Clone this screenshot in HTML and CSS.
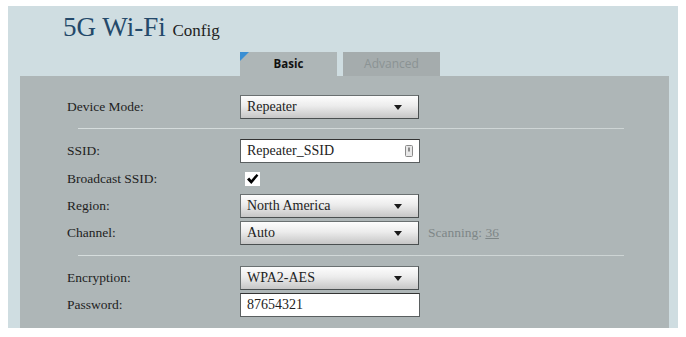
FILE: index.html
```html
<!DOCTYPE html>
<html lang="en">

<head>
    <meta charset="utf-8">
    <title>5G Wi-Fi Config</title>
    <link rel="stylesheet" href="styles.css">
</head>

<body>
    <div class="ramme">
        <h1 class="titel"><span class="stor">5G Wi-Fi</span> <span class="lille">Config</span></h1>

        <nav class="faner">
            <div class="fane valgt">Basic</div>
            <div class="fane">Advanced</div>
        </nav>

        <section class="panel">
            <div class="raekke">
                <div class="etiket">Device Mode:</div>
                <div class="vaelger"><span>Repeater</span><svg class="pil" width="8" height="5" viewBox="0 0 8 5"><path d="M0 0H8L4 5Z" fill="#1a1a1a"/></svg></div>
            </div>

            <hr class="skille skille1">

            <div class="raekke">
                <div class="etiket">SSID:</div>
                <div class="felt"><span>Repeater_SSID</span>
                    <svg class="noegle" width="8" height="12" viewBox="0 0 8 12"><rect x="0.5" y="0.5" width="7" height="11" rx="1" fill="#e8e8e8" stroke="#8a8a8a"/><rect x="3" y="2.5" width="2" height="4" fill="#8a8a8a"/></svg>
                </div>
            </div>

            <div class="raekke hoej">
                <div class="etiket">Broadcast SSID:</div>
                <div class="tjek"><svg width="15" height="14" viewBox="0 0 15 14"><path d="M2 7.5L4.2 5.6L6.3 8L11.5 2L13.4 3.6L6.3 12Z" fill="#000"/></svg></div>
            </div>

            <div class="raekke">
                <div class="etiket">Region:</div>
                <div class="vaelger"><span>North America</span><svg class="pil" width="8" height="5" viewBox="0 0 8 5"><path d="M0 0H8L4 5Z" fill="#1a1a1a"/></svg></div>
            </div>

            <div class="raekke">
                <div class="etiket">Channel:</div>
                <div class="vaelger"><span>Auto</span><svg class="pil" width="8" height="5" viewBox="0 0 8 5"><path d="M0 0H8L4 5Z" fill="#1a1a1a"/></svg></div>
                <div class="scanning">Scanning: <u>36</u></div>
            </div>

            <hr class="skille skille2">

            <div class="raekke">
                <div class="etiket">Encryption:</div>
                <div class="vaelger"><span>WPA2-AES</span><svg class="pil" width="8" height="5" viewBox="0 0 8 5"><path d="M0 0H8L4 5Z" fill="#1a1a1a"/></svg></div>
            </div>

            <div class="raekke">
                <div class="etiket">Password:</div>
                <div class="felt"><span>87654321</span></div>
            </div>
        </section>
    </div>
</body>

</html>
```

FILE: styles.css
```css
* {
    margin: 0;
    padding: 0;
    box-sizing: border-box;
}

body {
    background-color: #ffffff;
    font-family: "Liberation Serif", serif;
    color: #222222;
}

.ramme {
    margin: 6px 8px 0 8px;
    width: 670px;
    background-color: #cfdde1;
    padding-top: 6px;
}

.titel {
    height: 30px;
    padding-left: 55px;
    font-weight: normal;
    font-size: 27px;
    line-height: 30px;
    white-space: nowrap;
    overflow: hidden;
}

.stor {
    color: #24496a;
}

.lille {
    font-size: 17px;
    color: #222222;
}

.faner {
    display: flex;
    gap: 6px;
    padding-left: 232px;
    margin-top: 10px;
}

.fane {
    position: relative;
    width: 97px;
    height: 24px;
    line-height: 24px;
    text-align: center;
    font-family: "Open Sans", sans-serif;
    font-size: 12px;
    color: #8b9394;
    background-color: #a5acad;
}

.valgt {
    background-color: #aeb6b7;
    color: #111111;
    font-weight: bold;
    font-size: 11.5px;
}

/* lille blå hjørne på den valgte fane */
.valgt::before {
    content: "";
    position: absolute;
    left: 0;
    top: 0;
    border-top: 9px solid #3b8fd4;
    border-right: 9px solid transparent;
}

.panel {
    background-color: #aeb6b7;
    margin-left: 12px;
    margin-right: 9px;
    padding: 19px 0 8px 47px;
}

.raekke {
    display: flex;
    align-items: center;
    height: 24px;
    margin-bottom: 3px;
}

.hoej {
    height: 25px;
}

.etiket {
    width: 173px;
    font-size: 13.5px;
    color: #1e1e1e;
}

.vaelger {
    display: flex;
    align-items: center;
    justify-content: space-between;
    width: 179px;
    height: 24px;
    padding: 0 16px 0 6px;
    font-size: 14px;
    border: 1px solid #6a7071;
    border-bottom-color: #4a4f50;
    border-right-color: #4a4f50;
    background: linear-gradient(#fdfdfd, #ececec 45%, #c6c6c6);
}

.felt {
    display: flex;
    align-items: center;
    justify-content: space-between;
    width: 180px;
    height: 24px;
    padding: 0 6px 0 6px;
    font-size: 14px;
    background-color: #ffffff;
    border: 1px solid #5a5f60;
    border-top-color: #333333;
}

.tjek {
    margin-left: 5px;
    width: 15px;
    height: 14px;
    background-color: #ffffff;
}

.tjek svg {
    display: block;
}

.scanning {
    margin-left: 9px;
    font-size: 13.5px;
    color: #7e8687;
}

.skille {
    border: none;
    height: 1px;
    background: linear-gradient(to right, #d6dddd, #cdd4d4);
    margin-left: 11px;
    margin-right: 45px;
}

.skille1 {
    margin-top: 9px;
    margin-bottom: 10px;
}

.skille2 {
    margin-top: 10px;
    margin-bottom: 10px;
}
```
